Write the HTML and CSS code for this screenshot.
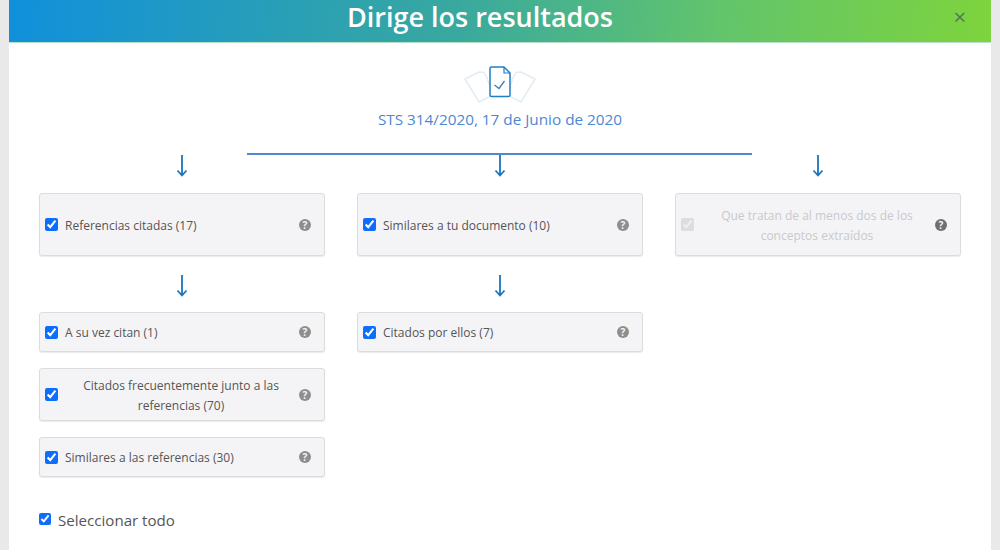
FILE: index.html
```html
<!DOCTYPE html>
<html lang="es">
<head>
    <meta charset="UTF-8">
    <meta name="viewport" content="width=device-width, initial-scale=1.0">
    <title>Dirige los resultados</title>
    <link rel="stylesheet" href="styles.css">
</head>
<body>
    <div class="modal">
        <header class="modal-header">
            <h1>Dirige los resultados</h1>
            <span class="close">&times;</span>
        </header>

        <div class="modal-body">
            <!-- Documento de origen -->
            <div class="source">
                <svg class="source-icon" width="72" height="37" viewBox="0 0 72 37" fill="none">
                    <g stroke="#e3ecf3" stroke-width="1.5" stroke-linejoin="round">
                        <path d="M1 13 L15 6 L20 6.5 L23 12 L29 29 L15 36 Z" fill="#fff"/>
                        <path d="M71 13 L57 6 L52 6.5 L49 12 L43 29 L57 36 Z" fill="#fff"/>
                    </g>
                    <path d="M28 1 H40 L46 7 V29 A1.5 1.5 0 0 1 44.5 30.5 H27.5 A1.5 1.5 0 0 1 26 29 V2.5 A1.5 1.5 0 0 1 27.5 1 Z" fill="#fff" stroke="#1f7fc4" stroke-width="1.5" stroke-linejoin="round"/>
                    <path d="M40 1 V7 H46" stroke="#1f7fc4" stroke-width="1.2" stroke-linejoin="round"/>
                    <path d="M30.5 19 L35 22.5 L40.5 15" stroke="#3f7fb5" stroke-width="1.3"/>
                </svg>
                <p class="source-title">STS 314/2020, 17 de Junio de 2020</p>
            </div>

            <div class="branch-line"></div>

            <div class="columns">
                <div class="column">
                    <svg class="arrow" width="12" height="22" viewBox="0 0 12 22" fill="none"><path d="M6 0 V20 M1.5 15.5 L6 20.5 L10.5 15.5" stroke="#1a75bb" stroke-width="1.8"/></svg>
                    <label class="card card-tall">
                        <input type="checkbox" checked>
                        <span class="card-text">Referencias citadas (17)</span>
                        <span class="help">?</span>
                    </label>
                    <svg class="arrow arrow-sub" width="12" height="22" viewBox="0 0 12 22" fill="none"><path d="M6 0 V20 M1.5 15.5 L6 20.5 L10.5 15.5" stroke="#1a75bb" stroke-width="1.8"/></svg>
                    <div class="card-list">
                        <label class="card">
                            <input type="checkbox" checked>
                            <span class="card-text">A su vez citan (1)</span>
                            <span class="help">?</span>
                        </label>
                        <label class="card">
                            <input type="checkbox" checked>
                            <span class="card-text centered">Citados frecuentemente junto a las referencias (70)</span>
                            <span class="help">?</span>
                        </label>
                        <label class="card">
                            <input type="checkbox" checked>
                            <span class="card-text">Similares a las referencias (30)</span>
                            <span class="help">?</span>
                        </label>
                    </div>
                </div>

                <div class="column">
                    <svg class="arrow" width="12" height="22" viewBox="0 0 12 22" fill="none"><path d="M6 0 V20 M1.5 15.5 L6 20.5 L10.5 15.5" stroke="#1a75bb" stroke-width="1.8"/></svg>
                    <label class="card card-tall">
                        <input type="checkbox" checked>
                        <span class="card-text">Similares a tu documento (10)</span>
                        <span class="help">?</span>
                    </label>
                    <svg class="arrow arrow-sub" width="12" height="22" viewBox="0 0 12 22" fill="none"><path d="M6 0 V20 M1.5 15.5 L6 20.5 L10.5 15.5" stroke="#1a75bb" stroke-width="1.8"/></svg>
                    <div class="card-list">
                        <label class="card">
                            <input type="checkbox" checked>
                            <span class="card-text">Citados por ellos (7)</span>
                            <span class="help">?</span>
                        </label>
                    </div>
                </div>

                <div class="column">
                    <svg class="arrow" width="12" height="22" viewBox="0 0 12 22" fill="none"><path d="M6 0 V20 M1.5 15.5 L6 20.5 L10.5 15.5" stroke="#1a75bb" stroke-width="1.8"/></svg>
                    <label class="card card-tall card-disabled">
                        <input type="checkbox" checked disabled>
                        <span class="card-text centered">Que tratan de al menos dos de los conceptos extraídos</span>
                        <span class="help">?</span>
                    </label>
                </div>
            </div>

            <label class="select-all">
                <input type="checkbox" checked>
                <span>Seleccionar todo</span>
            </label>
        </div>
    </div>
</body>
</html>
```

FILE: styles.css
```css
html, body {
    height: 100%;
}

body {
    margin: 0;
    font-family: "Open Sans", "Noto Sans", Arial, sans-serif;
    background-color: #e9e9e9;
    overflow: hidden;
}

.modal {
    width: 982px;
    height: 550px;
    margin-left: 9px;
    background-color: #fff;
}

.modal-header {
    height: 43px;
    display: flex;
    justify-content: center;
    position: relative;
    padding-right: 40px;
    background: linear-gradient(95deg, #1090dc 0%, #38a8a0 45%, #62c46c 72%, #7ed43c 100%);
    border-bottom: 1px solid #b9dfc8;
    box-sizing: border-box;
}

.modal-header h1 {
    margin: 0;
    color: #fff;
    font-size: 27px;
    font-weight: 600;
    line-height: 34px;
}

.close {
    position: absolute;
    right: 25px;
    top: 3px;
    font-size: 22px;
    line-height: 26px;
    color: #4f7a55;
}

.modal-body {
    padding: 23px 30px 0;
}

.source {
    display: flex;
    flex-direction: column;
    align-items: center;
}

.source-icon {
    display: block;
    margin-bottom: -3px;
}

.source-title {
    margin: 7px 0 0;
    font-size: 15.3px;
    line-height: 24px;
    color: #4c88d4;
}

.branch-line {
    width: 505px;
    height: 2px;
    margin: 22px 0 0 208px;
    background-color: #5488cc;
}

.columns {
    display: grid;
    grid-template-columns: repeat(3, 286px);
    column-gap: 32px;
}

.column {
    display: flex;
    flex-direction: column;
    align-items: center;
}

.arrow {
    display: block;
    margin-bottom: 16px;
}

.arrow-sub {
    margin-top: 19px;
    margin-bottom: 15px;
}

.card-list {
    display: flex;
    flex-direction: column;
    gap: 16px;
    width: 100%;
}

.card {
    display: flex;
    align-items: center;
    box-sizing: border-box;
    width: 100%;
    min-height: 40px;
    padding: 5px 13px 5px 5px;
    background-color: #f4f4f6;
    border: 1px solid #dcdcdf;
    border-radius: 3px;
    box-shadow: 0 1px 1px rgba(0, 0, 0, 0.08);
    font-size: 12px;
    line-height: 19.5px;
    color: #555;
}

.card-tall {
    min-height: 63px;
}

.card input {
    flex: none;
    width: 13px;
    height: 13px;
    margin: 0 7px 0 0;
    accent-color: #0d6efd;
}

.card-text {
    flex: 1;
    padding-top: 2px;
}

.centered {
    padding-left: 4px;
    text-align: center;
}

.help {
    flex: none;
    width: 12px;
    height: 12px;
    margin-left: 6px;
    border-radius: 50%;
    background-color: #8e8e8e;
    color: #f4f4f6;
    font-size: 10px;
    font-weight: 700;
    line-height: 12px;
    text-align: center;
}

.card-disabled {
    color: #c9c9cd;
}

.card-disabled input {
    opacity: 0.6;
}

.card-disabled .help {
    background-color: #6f6f6f;
}

.select-all {
    display: flex;
    align-items: center;
    gap: 7px;
    margin-top: 32px;
    font-size: 15.1px;
    line-height: 22px;
    color: #555;
}

.select-all input {
    width: 12px;
    height: 12px;
    margin: 0 0 2px;
    accent-color: #0d6efd;
}
```
